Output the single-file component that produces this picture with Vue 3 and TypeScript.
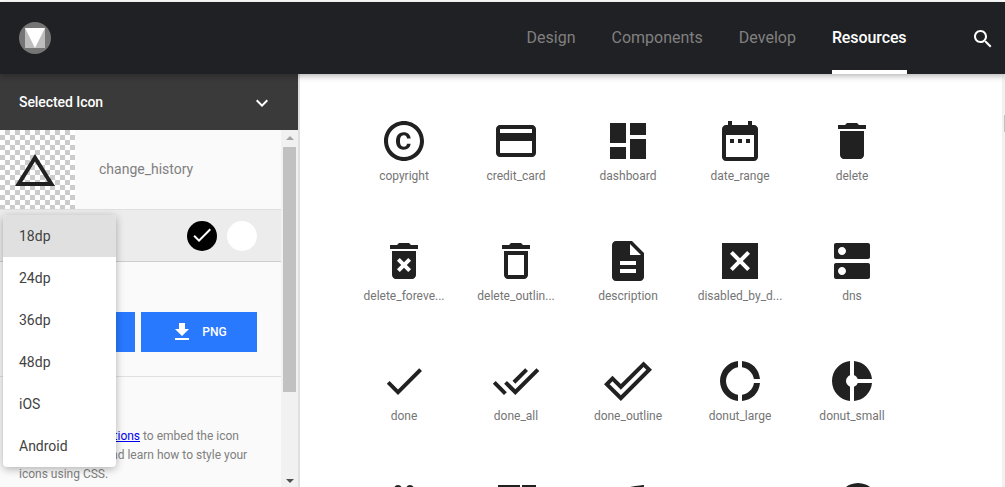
<script setup lang="ts">
interface IconItem { name: string; d: string }

const icons: IconItem[] = [
  { name: 'copyright', d: 'M10.08 10.86c.05-.33.16-.62.3-.87s.34-.46.59-.62c.24-.15.54-.22.91-.23.23.01.44.05.63.13.2.09.38.21.52.36s.25.33.34.53.13.42.14.64h1.79c-.02-.47-.11-.9-.28-1.29s-.4-.73-.7-1.01-.66-.5-1.08-.66-.88-.23-1.39-.23c-.65 0-1.22.11-1.7.34s-.88.53-1.2.92-.56.84-.71 1.36S8 11.29 8 11.87v.27c0 .58.08 1.12.23 1.64s.39.97.71 1.35.72.69 1.2.91 1.05.34 1.7.34c.47 0 .91-.08 1.32-.23s.77-.36 1.08-.63.56-.58.74-.94.29-.74.3-1.15h-1.79c-.01.21-.06.4-.15.58s-.21.33-.36.46-.32.23-.52.3c-.19.07-.39.09-.6.1-.36-.01-.66-.08-.89-.23-.25-.16-.45-.37-.59-.62s-.25-.55-.3-.88-.08-.67-.08-1v-.27c0-.35.03-.68.08-1.01zM12 2C6.48 2 2 6.48 2 12s4.48 10 10 10 10-4.48 10-10S17.52 2 12 2zm0 18c-4.41 0-8-3.59-8-8s3.59-8 8-8 8 3.59 8 8-3.59 8-8 8z' },
  { name: 'credit_card', d: 'M20 4H4c-1.11 0-1.99.89-1.99 2L2 18c0 1.11.89 2 2 2h16c1.11 0 2-.89 2-2V6c0-1.11-.89-2-2-2zm0 14H4v-6h16v6zm0-10H4V6h16v2z' },
  { name: 'dashboard', d: 'M3 13h8V3H3v10zm0 8h8v-6H3v6zm10 0h8V11h-8v10zm0-18v6h8V3h-8z' },
  { name: 'date_range', d: 'M9 11H7v2h2v-2zm4 0h-2v2h2v-2zm4 0h-2v2h2v-2zm2-7h-1V2h-2v2H8V2H6v2H5c-1.11 0-1.99.9-1.99 2L3 20c0 1.1.89 2 2 2h14c1.1 0 2-.9 2-2V6c0-1.1-.9-2-2-2zm0 16H5V9h14v11z' },
  { name: 'delete', d: 'M6 19c0 1.1.9 2 2 2h8c1.1 0 2-.9 2-2V7H6v12zM19 4h-3.5l-1-1h-5l-1 1H5v2h14V4z' },
  { name: 'delete_foreve...', d: 'M6 19c0 1.1.9 2 2 2h8c1.1 0 2-.9 2-2V7H6v12zm2.46-7.12l1.41-1.41L12 12.59l2.12-2.12 1.41 1.41L13.41 14l2.12 2.12-1.41 1.41L12 15.41l-2.12 2.12-1.41-1.41L10.59 14l-2.13-2.12zM15.5 4l-1-1h-5l-1 1H5v2h14V4z' },
  { name: 'delete_outlin...', d: 'M6 19c0 1.1.9 2 2 2h8c1.1 0 2-.9 2-2V7H6v12zM8 9h8v10H8V9zm7.5-5l-1-1h-5l-1 1H5v2h14V4z' },
  { name: 'description', d: 'M14 2H6c-1.1 0-1.99.9-1.99 2L4 20c0 1.1.89 2 1.99 2H18c1.1 0 2-.9 2-2V8l-6-6zm2 16H8v-2h8v2zm0-4H8v-2h8v2zm-3-5V3.5L18.5 9H13z' },
  { name: 'disabled_by_d...', d: 'M3 3v18h18V3H3zm14 12.59L15.59 17 12 13.41 8.41 17 7 15.59 10.59 12 7 8.41 8.41 7 12 10.59 15.59 7 17 8.41 13.41 12 17 15.59z' },
  { name: 'dns', d: 'M20 13H4c-.55 0-1 .45-1 1v6c0 .55.45 1 1 1h16c.55 0 1-.45 1-1v-6c0-.55-.45-1-1-1zM7 19c-1.1 0-2-.9-2-2s.9-2 2-2 2 .9 2 2-.9 2-2 2zM20 3H4c-.55 0-1 .45-1 1v6c0 .55.45 1 1 1h16c.55 0 1-.45 1-1V4c0-.55-.45-1-1-1zM7 9c-1.1 0-2-.9-2-2s.9-2 2-2 2 .9 2 2-.9 2-2 2z' },
  { name: 'done', d: 'M9 16.2L4.8 12l-1.4 1.4L9 19 21 7l-1.4-1.4L9 16.2z' },
  { name: 'done_all', d: 'M18 7l-1.41-1.41-6.34 6.34 1.41 1.41L18 7zm4.24-1.41L11.66 16.17 7.48 12l-1.41 1.41L11.66 19l12-12-1.42-1.41zM.41 13.41L6 19l1.41-1.41L1.83 12 .41 13.41z' },
  { name: 'done_outline', d: 'M19.77 5.03l1.4 1.4L8.43 19.17l-5.6-5.6 1.4-1.4 4.2 4.2L19.77 5.03m0-2.83L8.43 13.54l-4.2-4.2L0 13.57 8.43 22 24 6.43 19.77 2.2z' },
  { name: 'donut_large', d: 'M11 5.08V2c-5 .5-9 4.81-9 10s4 9.5 9 10v-3.08c-3-.48-6-3.4-6-6.92s3-6.44 6-6.92zM18.97 11H22c-.47-5-4-8.53-9-9v3.08C16 5.51 18.54 8 18.97 11zM13 18.92V22c5-.47 8.53-4 9-9h-3.03c-.43 3-2.97 5.49-5.97 5.92z' },
  { name: 'donut_small', d: 'M11 9.16V2c-5 .5-9 4.79-9 10s4 9.5 9 10v-7.16c-1-.41-2-1.52-2-2.84s1-2.43 2-2.84zM14.86 11H22c-.48-4.75-4-8.53-9-9v7.16c1 .3 1.52.98 1.86 1.84zM13 14.84V22c5-.47 8.52-4.25 9-9h-7.14c-.34.86-.86 1.54-1.86 1.84z' },
  { name: '', d: 'M11 18c0 1.1-.9 2-2 2s-2-.9-2-2 .9-2 2-2 2 .9 2 2zm-2-8c-1.1 0-2 .9-2 2s.9 2 2 2 2-.9 2-2-.9-2-2-2zm0-6c-1.1 0-2 .9-2 2s.9 2 2 2 2-.9 2-2-.9-2-2-2zm6 4c1.1 0 2-.9 2-2s-.9-2-2-2-2 .9-2 2 .9 2 2 2zm0 2c-1.1 0-2 .9-2 2s.9 2 2 2 2-.9 2-2-.9-2-2-2zm0 6c-1.1 0-2 .9-2 2s.9 2 2 2 2-.9 2-2-.9-2-2-2z' },
  { name: '', d: 'M3 4h11v5H3zM15 4h7v5h-7zM3 11h11v5H3z' },
  { name: '', d: 'M6.05 8.05c-2.73 2.73-2.73 7.15-.02 9.88 1.47-3.4 4.09-6.24 7.36-7.93-2.77 2.34-4.71 5.61-5.39 9.32 2.6 1.23 5.8.78 7.95-1.37C19.43 14.47 20 4 20 4S9.53 4.57 6.05 8.05z' },
  { name: '', d: 'M5 17h14v2H5zm7-12L5.33 15h13.34z' },
  { name: '', d: 'M15 3a10 10 0 1 0 0 20 10 10 0 0 0 0-20z' }
]

const sizes: string[] = ['18dp', '24dp', '36dp', '48dp', 'iOS', 'Android']
const navItems: string[] = ['Design', 'Components', 'Develop']
</script>

<template>
  <div class="page">
    <header class="topbar">
      <svg class="logo" width="32" height="32" viewBox="0 0 32 32">
        <circle cx="16" cy="16" r="16" fill="#757575" />
        <rect x="6" y="6" width="20" height="20" fill="#bdbdbd" />
        <path d="M6 6h20L16 26z" fill="#fff" />
      </svg>
      <nav class="nav">
        <a v-for="item in navItems" :key="item" class="nav-link">{{ item }}</a>
        <a class="nav-link active">Resources</a>
      </nav>
      <svg class="search" width="24" height="24" viewBox="0 0 24 24">
        <path fill="#fff" d="M15.5 14h-.79l-.28-.27C15.41 12.59 16 11.11 16 9.5 16 5.91 13.09 3 9.5 3S3 5.91 3 9.5 5.91 16 9.5 16c1.61 0 3.09-.59 4.23-1.57l.27.28v.79l5 4.99L20.49 19l-4.99-5zm-6 0C7.01 14 5 11.99 5 9.5S7.01 5 9.5 5 14 7.01 14 9.5 11.99 14 9.5 14z" />
      </svg>
    </header>

    <div class="body">
      <aside class="side">
        <div class="side-head">
          <span class="side-title">Selected Icon</span>
          <svg width="24" height="24" viewBox="0 0 24 24">
            <path fill="#fff" d="M16.59 8.59L12 13.17 7.41 8.59 6 10l6 6 6-6z" />
          </svg>
        </div>
        <div class="side-scroll">
          <div class="panel">
            <div class="preview">
              <div class="checker">
                <svg width="48" height="48" viewBox="0 0 24 24">
                  <path fill="#212121" d="M12 7.77L18.39 18H5.61L12 7.77M12 4L2 20h20L12 4z" />
                </svg>
              </div>
              <span class="icon-name">change_history</span>
            </div>
            <div class="colors">
              <span class="swatch black">
                <svg width="24" height="24" viewBox="0 0 24 24">
                  <path fill="#fff" d="M9 16.2L4.8 12l-1.4 1.4L9 19 21 7l-1.4-1.4L9 16.2z" />
                </svg>
              </span>
              <span class="swatch white"></span>
            </div>
            <div class="downloads">
              <button class="dl" type="button" aria-label="SVG"></button>
              <button class="dl" type="button">
                <svg width="24" height="24" viewBox="0 0 24 24">
                  <path fill="#fff" d="M19 9h-4V3H9v6H5l7 7 7-7zM5 18v2h14v-2H5z" />
                </svg>
                <span>PNG</span>
              </button>
            </div>
            <p class="note">
              Follow the <a class="link">instructions</a> to embed the icon font in your site and learn how to style your icons using CSS.
            </p>
          </div>
          <div class="rail">
            <span class="arrow up"></span>
            <span class="thumb"></span>
            <span class="arrow down"></span>
          </div>
        </div>
        <ul class="menu">
          <li v-for="(size, i) in sizes" :key="size" class="menu-item" :class="{ selected: i === 0 }">{{ size }}</li>
        </ul>
      </aside>

      <main class="main">
        <div class="grid">
          <div v-for="(icon, i) in icons" :key="i" class="cell">
            <svg width="48" height="48" viewBox="0 0 24 24">
              <path fill="#212121" :d="icon.d" />
            </svg>
            <span v-if="icon.name" class="label">{{ icon.name }}</span>
          </div>
        </div>
        <div class="page-rail"><span class="page-thumb"></span></div>
      </main>
    </div>
  </div>
</template>

<style>
html, body {
  margin: 0;
  background: #fff;
  overflow: hidden;
}
</style>

<style scoped>
.page {
  box-sizing: border-box;
  height: 487px;
  padding-top: 2px;
  display: flex;
  flex-direction: column;
  overflow: hidden;
  font-family: Roboto, "Liberation Sans", sans-serif;
  background: #fff;
}
.topbar {
  position: relative;
  z-index: 2;
  flex: none;
  height: 72px;
  display: flex;
  align-items: center;
  padding: 0 10px 0 19px;
  background: #202124;
  box-shadow: 0 2px 6px rgba(0, 0, 0, .3);
}
.nav {
  margin-left: auto;
  height: 100%;
  display: flex;
  gap: 36px;
  margin-right: 64.5px;
}
.nav-link {
  box-sizing: border-box;
  height: 100%;
  display: flex;
  align-items: center;
  font-size: 16px;
  color: #808080;
  border-bottom: 4px solid transparent;
  padding-top: 3px;
}
.nav-link.active {
  color: #fff;
  font-weight: 500;
  letter-spacing: -.1px;
  border-bottom-color: #fff;
}
.search {
  margin-top: 1px;
}
.body {
  flex: 1;
  min-height: 0;
  display: flex;
}
.side {
  position: relative;
  box-sizing: border-box;
  flex: none;
  width: 300px;
  border-right: 2px solid #e0e0e0;
  display: flex;
  flex-direction: column;
}
.side-head {
  flex: none;
  height: 56px;
  display: flex;
  align-items: center;
  justify-content: space-between;
  padding: 0 24px 0 19px;
  background: #3a3a3a;
  color: #fff;
  font-size: 14px;
  font-weight: 500;
}
.side-title {
  margin-bottom: 1px;
  letter-spacing: -.07px;
}
.side-head svg {
  margin-top: 2px;
}
.side-scroll {
  flex: 1;
  min-height: 0;
  display: flex;
}
.panel {
  flex: 1;
  min-width: 0;
  background: #fafafa;
  overflow: hidden;
}
.preview {
  height: 79px;
  display: flex;
  align-items: center;
  border-bottom: 1px solid #e0e0e0;
}
.checker {
  flex: none;
  box-sizing: border-box;
  width: 75px;
  height: 79px;
  padding-left: 11px;
  display: flex;
  align-items: center;
  background: repeating-conic-gradient(#ccc 0 25%, #fff 0 50%) 0 0 / 10px 10px;
}
.icon-name {
  margin: 0 0 2px 24px;
  font-size: 14px;
  color: #808080;
}
.colors {
  height: 51px;
  display: flex;
  align-items: center;
  justify-content: flex-end;
  gap: 10px;
  padding-right: 24px;
  background: #ececec;
  border-bottom: 1px solid #ccc;
}
.swatch {
  width: 30px;
  height: 30px;
  border-radius: 50%;
  display: flex;
  align-items: center;
  justify-content: center;
}
.swatch svg {
  margin-top: -1px;
}
.swatch.black { background: #000; }
.swatch.white { background: #fff; }
.downloads {
  height: 115px;
  box-sizing: border-box;
  display: flex;
  gap: 6px;
  padding: 50px 24px 0 19px;
  border-bottom: 1px solid #e0e0e0;
}
.dl {
  flex: none;
  width: 116px;
  height: 40px;
  border: 0;
  padding: 0 1px 0 0;
  display: flex;
  align-items: center;
  justify-content: center;
  gap: 8px;
  background: #2979ff;
  color: #fff;
  font-family: inherit;
  font-size: 12px;
  font-weight: 500;
}
.note {
  margin: 50px 0 0;
  padding: 0 24px 0 19px;
  font-size: 12px;
  line-height: 19px;
  color: #808080;
}
.link {
  color: #0000ee;
  text-decoration: underline;
}
.rail {
  flex: none;
  width: 17px;
  display: flex;
  flex-direction: column;
  align-items: center;
  background: #f1f1f1;
}
.arrow {
  flex: none;
  width: 0;
  height: 0;
  border-left: 4px solid transparent;
  border-right: 4px solid transparent;
}
.arrow.up {
  margin-top: 6px;
  border-bottom: 4px solid #a3a3a3;
}
.arrow.down {
  margin-top: 87px;
  border-top: 4px solid #505050;
}
.thumb {
  flex: none;
  width: 13px;
  height: 245px;
  margin-top: 7px;
  background: #c1c1c1;
}
.menu {
  position: absolute;
  z-index: 3;
  left: 3px;
  top: 141px;
  width: 113px;
  margin: 0;
  padding: 0;
  list-style: none;
  background: #fff;
  border-radius: 4px;
  overflow: hidden;
  box-shadow: 0 2px 8px rgba(0, 0, 0, .3);
}
.menu-item {
  box-sizing: border-box;
  height: 42px;
  padding: 0 0 1px 16px;
  display: flex;
  align-items: center;
  font-size: 14px;
  color: #424242;
}
.menu-item.selected {
  background: #e0e0e0;
}
.main {
  flex: 1;
  min-width: 0;
  display: flex;
  overflow: hidden;
}
.grid {
  flex: 1;
  min-width: 0;
  padding: 43px 0 0 48px;
  display: grid;
  grid-template-columns: repeat(5, 112px);
  grid-auto-rows: 120px;
  align-content: start;
}
.cell {
  display: flex;
  flex-direction: column;
  align-items: center;
}
.label {
  margin-top: 1px;
  white-space: nowrap;
  font-size: 12px;
  line-height: 20px;
  color: #757575;
}
.page-rail {
  flex: none;
  width: 3px;
  background: #f1f1f1;
}
.page-thumb {
  display: block;
  margin: 41px 0 0 2px;
  height: 17px;
  background: #c1c1c1;
}
</style>
